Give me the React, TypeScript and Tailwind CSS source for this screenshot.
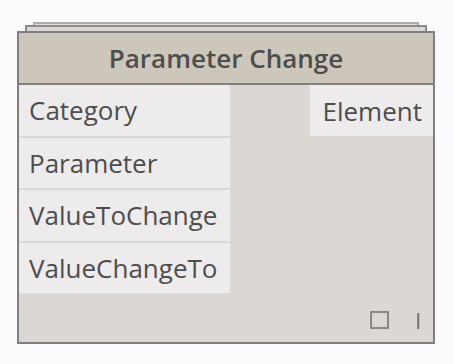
import React from "react";

const font = { fontFamily: '"Open Sans", "Noto Sans", sans-serif' };

export default function App() {
  const inputs = ["Category", "Parameter", "ValueToChange", "ValueChangeTo"];
  return (
    <div className="w-[454px] h-[364px] bg-[#fdfbfd] overflow-hidden" style={font}>
      <div className="flex flex-col items-start pt-[22px] pl-[17px]">
        <div className="ml-[16px] w-[386px] h-[3px] border-t-2 border-x-2 border-[#acacac] bg-[#e4e0df]" />
        <div className="ml-[8px] w-[402px] h-[6px] border-t-2 border-x-2 border-[#8a8a8a] bg-[#ddd7d4]" />
        <div className="w-[418px] h-[313px] border-2 border-[#7f7f7f] bg-[#ddd7d4] flex flex-col">
          <div className="h-[52px] shrink-0 bg-[#cdc6bb] border-b-2 border-[#7f7f7f] flex items-center justify-center">
            <span className="text-[26px] font-semibold text-[#4d4d4d] leading-none">Parameter Change</span>
          </div>
          <div className="flex flex-row justify-between">
            <div className="w-[211px] flex flex-col gap-[2px]">
              {inputs.map((t) => (
                <div key={t} className="h-[50.5px] bg-[#eeebed] flex items-center pl-[10px]">
                  <span className="text-[26px] text-[#4d4d4d] leading-none">{t}</span>
                </div>
              ))}
            </div>
            <div className="w-[123px] h-[51px] bg-[#eeebed] flex items-center justify-end pr-[11px]">
              <span className="text-[26px] text-[#4d4d4d] leading-none">Element</span>
            </div>
          </div>
          <div className="flex-1 flex items-end justify-end pr-[12px] pb-[13px]">
            <div className="w-[19px] h-[18px] border-2 border-[#888888]" />
            <span className="ml-[26px] text-[21px] leading-[16px] h-[16px] text-[#6a6a6a]">I</span>
          </div>
        </div>
      </div>
    </div>
  );
}
